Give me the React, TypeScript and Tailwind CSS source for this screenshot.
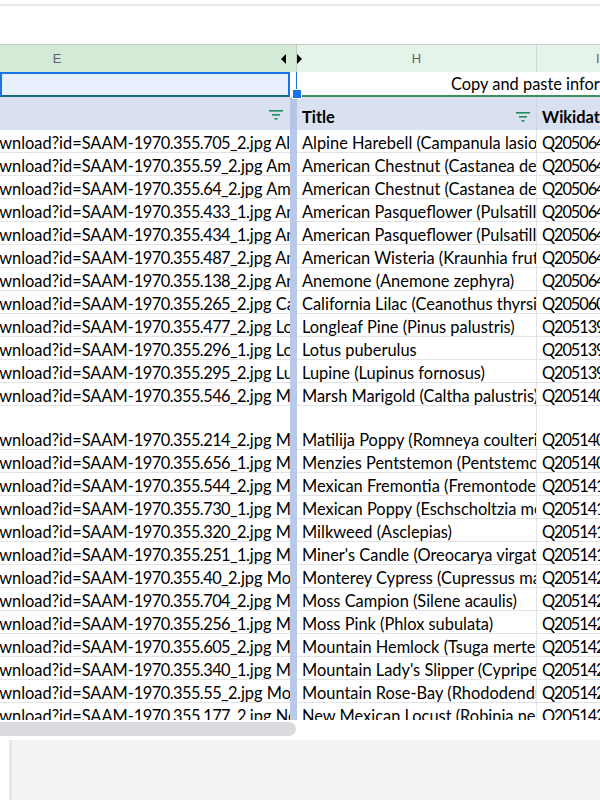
import React, { FC } from "react";

/**
 * One data row of the sheet
 */
interface SheetRow {
  id: string;
  title: string;
  qid: string;
  tall?: boolean;
}

const rows: SheetRow[] = [
  { id: "705_2", title: "Alpine Harebell (Campanula lasiocarpa)", qid: "Q20506412" },
  { id: "59_2", title: "American Chestnut (Castanea dentata)", qid: "Q20506423" },
  { id: "64_2", title: "American Chestnut (Castanea dentata)", qid: "Q20506431" },
  { id: "433_1", title: "American Pasqueflower (Pulsatilla patens)", qid: "Q20506447" },
  { id: "434_1", title: "American Pasqueflower (Pulsatilla patens)", qid: "Q20506452" },
  { id: "487_2", title: "American Wisteria (Kraunhia frutescens)", qid: "Q20506468" },
  { id: "138_2", title: "Anemone (Anemone zephyra)", qid: "Q20506473" },
  { id: "265_2", title: "California Lilac (Ceanothus thyrsiflorus)", qid: "Q20506090" },
  { id: "477_2", title: "Longleaf Pine (Pinus palustris)", qid: "Q20513921" },
  { id: "296_1", title: "Lotus puberulus", qid: "Q20513934" },
  { id: "295_2", title: "Lupine (Lupinus fornosus)", qid: "Q20513948" },
  { id: "546_2", title: "Marsh Marigold (Caltha palustris)", qid: "Q20514002" },
  { id: "214_2", title: "Matilija Poppy (Romneya coulteri)", qid: "Q20514015", tall: true },
  { id: "656_1", title: "Menzies Pentstemon (Pentstemon menziesii)", qid: "Q20514027" },
  { id: "544_2", title: "Mexican Fremontia (Fremontodendron mexicanum)", qid: "Q20514103" },
  { id: "730_1", title: "Mexican Poppy (Eschscholtzia mexicana)", qid: "Q20514116" },
  { id: "320_2", title: "Milkweed (Asclepias)", qid: "Q20514128" },
  { id: "251_1", title: "Miner's Candle (Oreocarya virgata)", qid: "Q20514139" },
  { id: "40_2", title: "Monterey Cypress (Cupressus macrocarpa)", qid: "Q20514204" },
  { id: "704_2", title: "Moss Campion (Silene acaulis)", qid: "Q20514217" },
  { id: "256_1", title: "Moss Pink (Phlox subulata)", qid: "Q20514225" },
  { id: "605_2", title: "Mountain Hemlock (Tsuga mertensiana)", qid: "Q20514238" },
  { id: "340_1", title: "Mountain Lady's Slipper (Cypripedium montanum)", qid: "Q20514246" },
  { id: "55_2", title: "Mountain Rose-Bay (Rhododendron californicum)", qid: "Q20514251" },
  { id: "177_2", title: "New Mexican Locust (Robinia neomexicana)", qid: "Q20514263" },
];

/**
 * Little green filter glyph used in the table header
 */
const FilterIcon: FC = () => (
  <svg width="16" height="10" viewBox="0 0 16 10" className="shrink-0">
    <rect x="1" y="0" width="14" height="1.6" fill="#1e8e5a" />
    <rect x="4" y="4" width="8" height="1.6" fill="#1e8e5a" />
    <rect x="6.5" y="8" width="3" height="1.6" fill="#1e8e5a" />
  </svg>
);

const App: FC = () => {
  return (
    <div className="w-[600px] h-[800px] bg-white overflow-hidden font-['Lato',sans-serif] text-[16.4px] leading-[16px] text-black">
      {/* toolbar strip */}
      <div className="h-[44px] pt-[4px]">
        <div className="h-[2px] bg-[#e6e7e9]" />
      </div>

      {/* sheet viewport */}
      <div className="h-[676px] overflow-hidden">
        {/* column letters */}
        <div className="flex h-[28px] border-t border-[#c7c9cc] text-[13px] text-[#5f6368] font-['Liberation_Sans',sans-serif]">
          <div className="w-[297px] flex items-center bg-[#d3ead6] border-r border-[#c2cfc4] relative">
            <span className="w-[114px] text-center">E</span>
            <span className="absolute right-[10px] top-[9px] w-0 h-0 border-y-[5px] border-y-transparent border-r-[5px] border-r-black" />
          </div>
          <div className="w-[240px] flex items-center justify-center bg-[#e6f3e8] border-r border-[#cfd8d0] relative">
            <span className="absolute left-[0px] top-[9px] w-0 h-0 border-y-[5px] border-y-transparent border-l-[5px] border-l-black" />
            H
          </div>
          <div className="flex-1 flex items-center bg-[#e6f3e8] pl-[59px]">I</div>
        </div>

        {/* row 1: selected cell + merged note */}
        <div className="flex h-[25px] relative">
          <div className="w-[290px] bg-[#e8f0fe] border-2 border-[#1a73e8] border-b-[#176b7a]" />
          <div className="w-[7px] border-r border-[#1a73e8]" />
          <div className="flex-1 flex items-end border-b-2 border-[#3e8f5c] pl-[154px] pb-[3px] whitespace-nowrap overflow-hidden">
            Copy and paste information from the collection
          </div>
          <span className="absolute left-[292px] top-[17px] w-[10px] h-[10px] bg-[#1a73e8] border border-white" />
        </div>

        {/* table header */}
        <div className="flex h-[33px] bg-[#d9e1f0] font-bold">
          <div className="w-[290px] flex items-center justify-end pr-[6px] pt-[3px]">
            <FilterIcon />
          </div>
          <div className="w-[7px] bg-[#b5c5e3]" />
          <div className="w-[240px] flex items-end justify-between pl-[5px] pr-[5px] pb-[5px] border-r border-[#cdd5e3]">
            <span>Title</span>
            <span className="mb-[3px]">
              <FilterIcon />
            </span>
          </div>
          <div className="flex-1 flex items-end pl-[5px] pb-[5px] whitespace-nowrap overflow-hidden">Wikidata ID</div>
        </div>

        {/* data rows */}
        {rows.map((r, idx) => (
          <div key={idx} className={`flex ${r.tall ? "h-[44px]" : "h-[23px]"}`}>
            <div className="w-[290px] flex items-end overflow-hidden whitespace-nowrap border-b border-[#e2e3e5] pb-[1px]">
              <span className="ml-[-10px]">
                ownload?id=SAAM-<span className="tracking-[-0.55px]">1970.355.{r.id}</span>.jpg {r.title}
              </span>
            </div>
            <div className="w-[7px] bg-[#b9cae9]" />
            <div className="w-[240px] flex items-end overflow-hidden whitespace-nowrap border-b border-r border-[#e2e3e5] pl-[5px] pb-[1px]">
              {r.title}
            </div>
            <div className="flex-1 flex items-end overflow-hidden whitespace-nowrap border-b border-[#e2e3e5] pl-[5px] pb-[1px] tracking-[-1.1px]">
              {r.qid}
            </div>
          </div>
        ))}
      </div>

      {/* horizontal scrollbar */}
      <div className="h-[20px] pt-[2px]">
        <div className="w-[296px] h-[14px] bg-[#dadce0] rounded-r-full" />
      </div>

      {/* bottom panel */}
      <div className="h-[60px] pl-[9px]">
        <div className="h-full bg-[#f3f3f3] border-l-[3px] border-[#e6e6e6]" />
      </div>
    </div>
  );
};

export default App;
